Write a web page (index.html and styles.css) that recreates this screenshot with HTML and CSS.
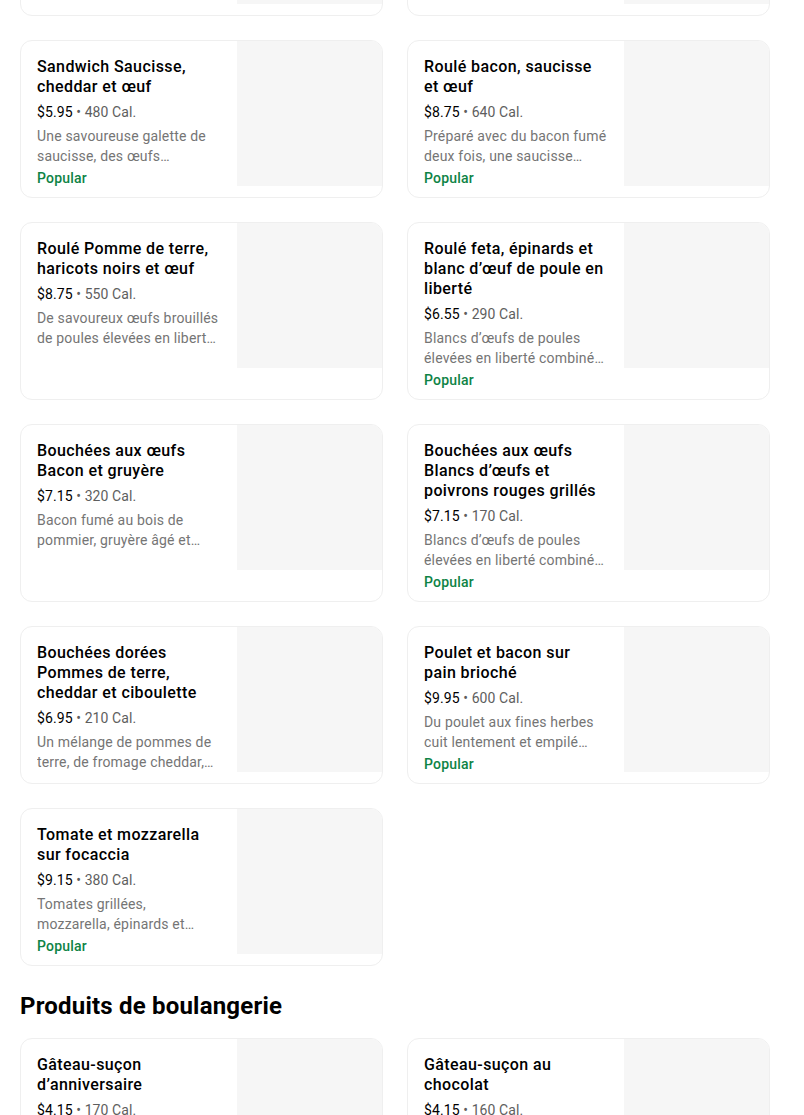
FILE: index.html
```html
<!DOCTYPE html>
<html lang="fr">
<head>
<meta charset="utf-8">
<title>Menu</title>
<link rel="stylesheet" href="styles.css">
</head>
<body>
<main class="menu">
  <section class="grid">
    <article class="card">
      <div class="info">
        <h3 class="title">Sandwich Œufs et fromage cheddar</h3>
        <p class="price">$5.45 <span class="cal">• 420 Cal.</span></p>
        <p class="desc">Des œufs de poules élevées en liberté…</p>
      </div>
      <div class="thumb"></div>
    </article>
    <article class="card">
      <div class="info">
        <h3 class="title">Sandwich Bacon, gouda et œuf</h3>
        <p class="price">$6.25 <span class="cal">• 360 Cal.</span></p>
        <p class="desc">Du bacon fumé au bois de pommier, du gouda…</p>
      </div>
      <div class="thumb"></div>
    </article>

    <article class="card">
      <div class="info">
        <h3 class="title">Sandwich Saucisse, cheddar et œuf</h3>
        <p class="price">$5.95 <span class="cal">• 480 Cal.</span></p>
        <p class="desc">Une savoureuse galette de saucisse, des œufs…</p>
        <p class="tag">Popular</p>
      </div>
      <div class="thumb"></div>
    </article>
    <article class="card">
      <div class="info">
        <h3 class="title">Roulé bacon, saucisse<br>et œuf</h3>
        <p class="price">$8.75 <span class="cal">• 640 Cal.</span></p>
        <p class="desc">Préparé avec du bacon fumé deux fois, une saucisse…</p>
        <p class="tag">Popular</p>
      </div>
      <div class="thumb"></div>
    </article>

    <article class="card">
      <div class="info">
        <h3 class="title">Roulé Pomme de terre, haricots noirs et œuf</h3>
        <p class="price">$8.75 <span class="cal">• 550 Cal.</span></p>
        <p class="desc">De savoureux œufs brouillés de poules élevées en libert…</p>
      </div>
      <div class="thumb"></div>
    </article>
    <article class="card">
      <div class="info">
        <h3 class="title">Roulé feta, épinards et blanc d’œuf de poule en liberté</h3>
        <p class="price">$6.55 <span class="cal">• 290 Cal.</span></p>
        <p class="desc">Blancs d’œufs de poules élevées en liberté combiné…</p>
        <p class="tag">Popular</p>
      </div>
      <div class="thumb"></div>
    </article>

    <article class="card">
      <div class="info">
        <h3 class="title">Bouchées aux œufs Bacon et gruyère</h3>
        <p class="price">$7.15 <span class="cal">• 320 Cal.</span></p>
        <p class="desc">Bacon fumé au bois de pommier, gruyère âgé et…</p>
      </div>
      <div class="thumb"></div>
    </article>
    <article class="card">
      <div class="info">
        <h3 class="title">Bouchées aux œufs Blancs d’œufs et poivrons rouges grillés</h3>
        <p class="price">$7.15 <span class="cal">• 170 Cal.</span></p>
        <p class="desc">Blancs d’œufs de poules élevées en liberté combiné…</p>
        <p class="tag">Popular</p>
      </div>
      <div class="thumb"></div>
    </article>

    <article class="card">
      <div class="info">
        <h3 class="title">Bouchées dorées Pommes de terre, cheddar et ciboulette</h3>
        <p class="price">$6.95 <span class="cal">• 210 Cal.</span></p>
        <p class="desc">Un mélange de pommes de terre, de fromage cheddar,…</p>
      </div>
      <div class="thumb"></div>
    </article>
    <article class="card">
      <div class="info">
        <h3 class="title">Poulet et bacon sur<br>pain brioché</h3>
        <p class="price">$9.95 <span class="cal">• 600 Cal.</span></p>
        <p class="desc">Du poulet aux fines herbes cuit lentement et empilé…</p>
        <p class="tag">Popular</p>
      </div>
      <div class="thumb"></div>
    </article>

    <article class="card">
      <div class="info">
        <h3 class="title">Tomate et mozzarella<br>sur focaccia</h3>
        <p class="price">$9.15 <span class="cal">• 380 Cal.</span></p>
        <p class="desc">Tomates grillées, mozzarella, épinards et…</p>
        <p class="tag">Popular</p>
      </div>
      <div class="thumb"></div>
    </article>
  </section>

  <h2 class="section-title">Produits de boulangerie</h2>

  <section class="grid">
    <article class="card">
      <div class="info">
        <h3 class="title">Gâteau-suçon<br>d’anniversaire</h3>
        <p class="price">$4.15 <span class="cal">• 170 Cal.</span></p>
        <p class="desc">Un gâteau vanille enrobé de glaçage rose…</p>
      </div>
      <div class="thumb"></div>
    </article>
    <article class="card">
      <div class="info">
        <h3 class="title">Gâteau-suçon au chocolat</h3>
        <p class="price">$4.15 <span class="cal">• 160 Cal.</span></p>
        <p class="desc">Un gâteau au chocolat enrobé de glaçage…</p>
      </div>
      <div class="thumb"></div>
    </article>
  </section>
</main>
</body>
</html>
```
FILE: styles.css
```css
* { box-sizing: border-box; }
html, body { margin: 0; padding: 0; background: #fff; }
body {
  font-family: Roboto, "Liberation Sans", Arial, sans-serif;
  color: #000;
  overflow: hidden;
}
.menu {
  width: 750px;
  margin: -142px 0 0 20px;
}
.grid {
  display: grid;
  grid-template-columns: 1fr 1fr;
  gap: 24px;
}
.card {
  display: flex;
  border: 1px solid #efefef;
  border-radius: 12px;
  overflow: hidden;
  background: #fff;
  min-height: 158px;
}
.info {
  flex: 1;
  min-width: 0;
  padding: 16px 16px 9px 16px;
}
.thumb {
  flex: 0 0 145px;
  height: 145px;
  background: #f6f6f6;
}
.title {
  margin: 0;
  font-size: 16px;
  line-height: 20px;
  font-weight: 500;
  letter-spacing: 0.4px;
  color: #000;
}
.price {
  margin: 5px 0 0;
  font-size: 14px;
  line-height: 20px;
  letter-spacing: 0.1px;
  color: #000;
}
.cal { color: #5e5e5e; }
.desc {
  margin: 4px 0 0;
  font-size: 14px;
  line-height: 20px;
  letter-spacing: 0.18px;
  color: #757575;
  display: -webkit-box;
  -webkit-line-clamp: 2;
  -webkit-box-orient: vertical;
  overflow: hidden;
}
.tag {
  margin: 2px 0 0;
  font-size: 14px;
  line-height: 20px;
  font-weight: 500;
  letter-spacing: 0.2px;
  color: #0e8345;
}
.section-title {
  margin: 24px 0 16px;
  font-size: 24px;
  line-height: 32px;
  font-weight: 700;
  letter-spacing: 0.2px;
  color: #000;
}
```
